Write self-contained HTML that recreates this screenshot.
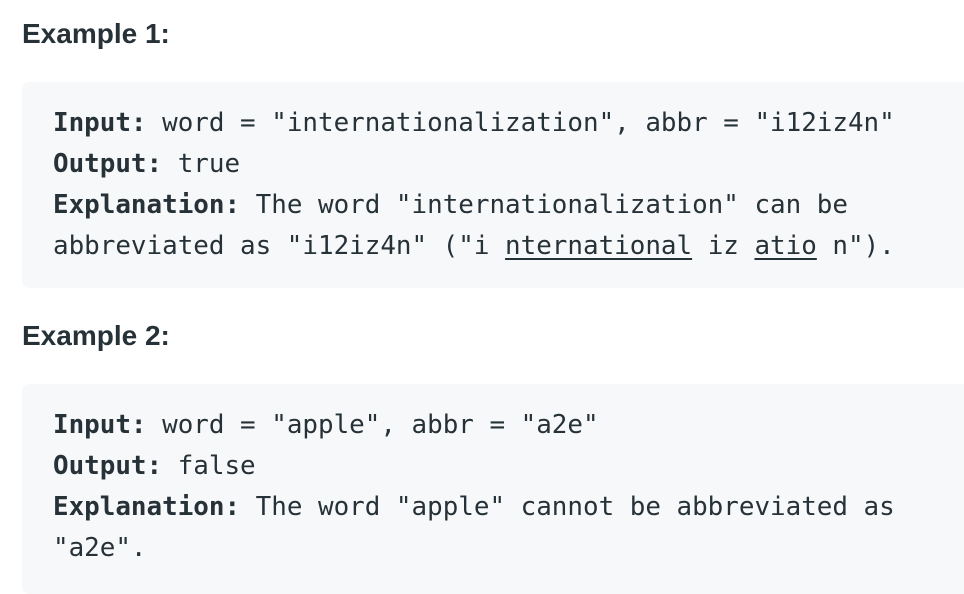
<!DOCTYPE html>
<html><head><style>
body{margin:0;background:#fff;width:964px;height:588px;overflow:hidden;color:#262626;}
h3{position:absolute;left:22px;margin:0;font:bold 28px/1 "Liberation Sans",sans-serif;color:#263238;}
pre{position:absolute;left:22px;width:960px;margin:0;background:#f7f8fa;border-radius:7px;padding:0 0 0 31px;box-sizing:border-box;font:25.9px/41px "DejaVu Sans Mono",monospace;color:#263238;}
b{font-weight:bold;}
u{text-decoration:underline;text-underline-offset:4px;}
</style></head><body>
<h3 style="top:20px">Example 1:</h3>
<pre style="top:82px;height:206px;padding-top:21px"><b>Input:</b> word = "internationalization", abbr = "i12iz4n"
<b>Output:</b> true
<b>Explanation:</b> The word "internationalization" can be
abbreviated as "i12iz4n" ("i <u>nternational</u> iz <u>atio</u> n").</pre>
<h3 style="top:322px">Example 2:</h3>
<pre style="top:384px;height:210px;padding-top:21px"><b>Input:</b> word = "apple", abbr = "a2e"
<b>Output:</b> false
<b>Explanation:</b> The word "apple" cannot be abbreviated as
"a2e".</pre>
</body></html>
